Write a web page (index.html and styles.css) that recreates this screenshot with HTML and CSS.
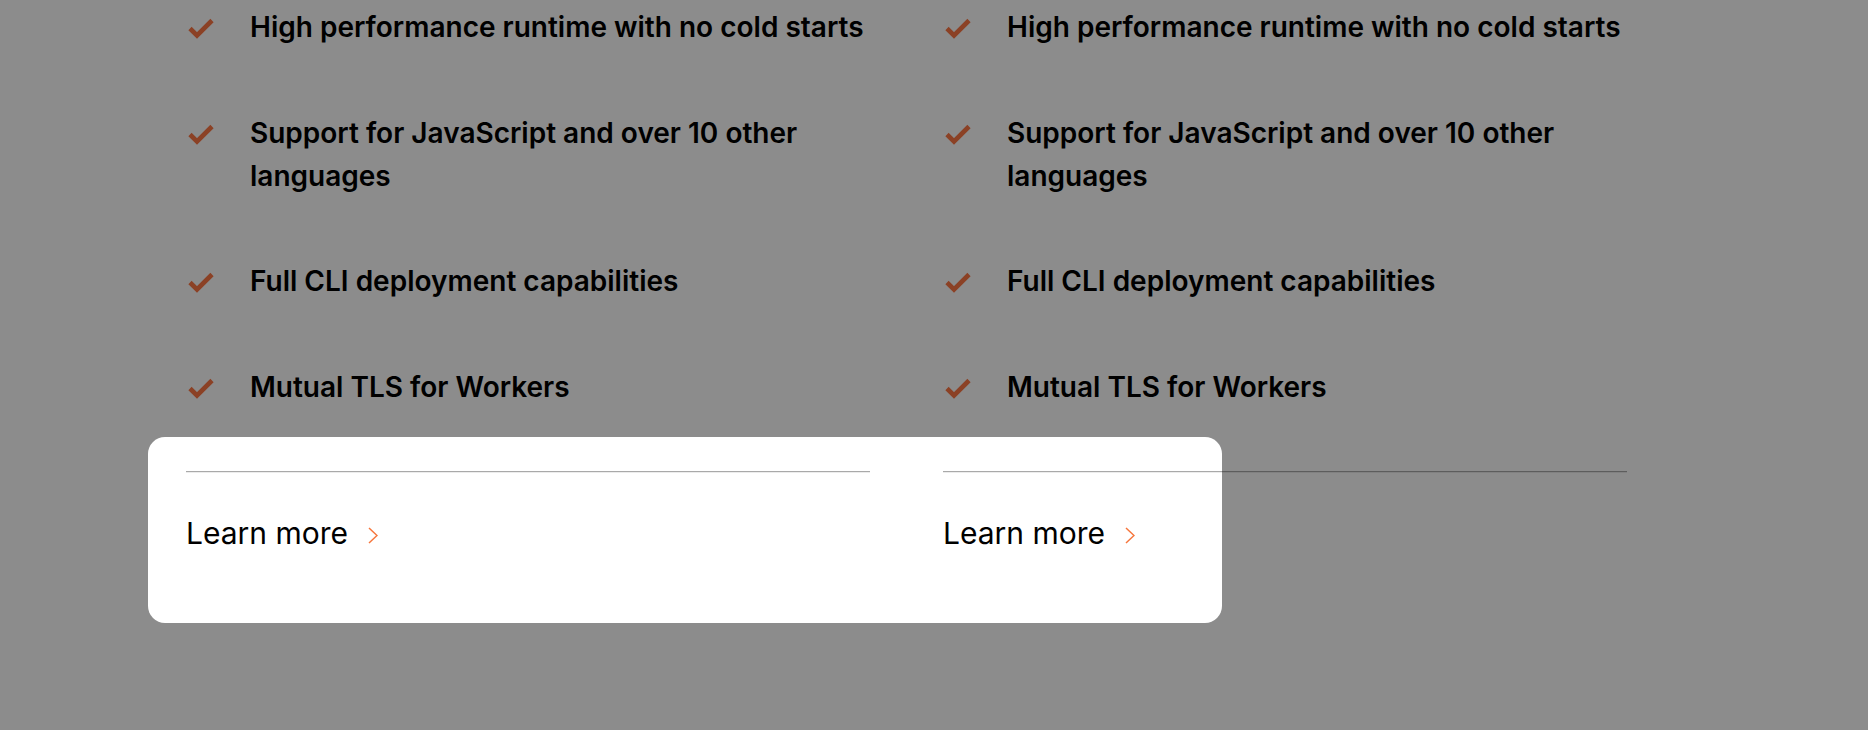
FILE: index.html
```html
<!DOCTYPE html>
<html lang="en">
<head>
<meta charset="utf-8">
<title>Workers features</title>
<link rel="stylesheet" href="styles.css">
</head>
<body>
<main class="plans">
  <section class="plan">
    <ul class="features">
      <li class="feature"><svg class="check" viewBox="0 0 28 22"><path d="M3 11.5 L10 18.5 L25 3.5"/></svg><span>High performance runtime with no cold starts</span></li>
      <li class="feature"><svg class="check" viewBox="0 0 28 22"><path d="M3 11.5 L10 18.5 L25 3.5"/></svg><span>Support for JavaScript and over 10 other languages</span></li>
      <li class="feature"><svg class="check" viewBox="0 0 28 22"><path d="M3 11.5 L10 18.5 L25 3.5"/></svg><span>Full CLI deployment capabilities</span></li>
      <li class="feature"><svg class="check" viewBox="0 0 28 22"><path d="M3 11.5 L10 18.5 L25 3.5"/></svg><span>Mutual TLS for Workers</span></li>
    </ul>
    <hr class="divider">
    <a class="learn" href="#">Learn more<svg class="chev" viewBox="0 0 10 17"><path d="M1 1 L9 8.5 L1 16"/></svg></a>
  </section>
  <section class="plan">
    <ul class="features">
      <li class="feature"><svg class="check" viewBox="0 0 28 22"><path d="M3 11.5 L10 18.5 L25 3.5"/></svg><span>High performance runtime with no cold starts</span></li>
      <li class="feature"><svg class="check" viewBox="0 0 28 22"><path d="M3 11.5 L10 18.5 L25 3.5"/></svg><span>Support for JavaScript and over 10 other languages</span></li>
      <li class="feature"><svg class="check" viewBox="0 0 28 22"><path d="M3 11.5 L10 18.5 L25 3.5"/></svg><span>Full CLI deployment capabilities</span></li>
      <li class="feature"><svg class="check" viewBox="0 0 28 22"><path d="M3 11.5 L10 18.5 L25 3.5"/></svg><span>Mutual TLS for Workers</span></li>
    </ul>
    <hr class="divider">
    <a class="learn" href="#">Learn more<svg class="chev" viewBox="0 0 10 17"><path d="M1 1 L9 8.5 L1 16"/></svg></a>
  </section>
</main>
<div class="spotlight"></div>
</body>
</html>
```

FILE: styles.css
```css
html, body {
  margin: 0;
  padding: 0;
  background: #ffffff;
  overflow: hidden;
}
body {
  width: 1868px;
  height: 730px;
  position: relative;
  font-family: Inter, "Noto Sans", "Liberation Sans", sans-serif;
  color: #000;
}
.plans {
  display: grid;
  grid-template-columns: 684px 684px;
  column-gap: 73px;
  padding: 6px 0 0 186px;
}
.features {
  list-style: none;
  margin: 0;
  padding: 0;
}
.feature {
  display: flex;
  align-items: flex-start;
  font-size: 28px;
  font-weight: 600;
  line-height: 43px;
  margin: 0 -30px 62.5px 0;
}
.feature:last-child {
  margin-bottom: 0;
}
.check {
  flex: 0 0 28px;
  width: 28px;
  height: 22px;
  margin: 11px 35px 0 1px;
}
.check path {
  fill: none;
  stroke: #fd7744;
  stroke-width: 4.6;
  stroke-linecap: butt;
  stroke-linejoin: miter;
}
.divider {
  margin: 62.5px 0 0 0;
  height: 0;
  border: 0;
  border-top: 1px solid #a9a9a9;
  border-bottom: 1px solid #ececec;
}
.learn {
  display: inline-flex;
  align-items: center;
  margin-top: 40px;
  font-size: 30px;
  font-weight: 400;
  line-height: 40px;
  color: #000;
  text-decoration: none;
}
.chev {
  width: 10px;
  height: 17px;
  margin-left: 20px;
  margin-top: 4px;
}
.chev path {
  fill: none;
  stroke: #f6763c;
  stroke-width: 1.5;
}
.spotlight {
  position: absolute;
  left: 148px;
  top: 437px;
  width: 1074px;
  height: 186px;
  border-radius: 17px;
  box-shadow: 0 0 0 3000px rgba(0, 0, 0, 0.45);
  pointer-events: none;
}
```
